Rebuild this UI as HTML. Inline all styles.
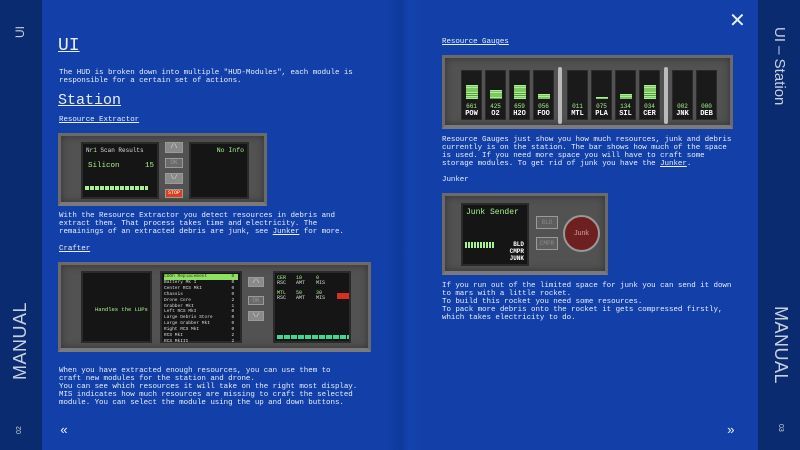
<!DOCTYPE html><html><head><style>
*{margin:0;padding:0;box-sizing:border-box}
body{width:800px;height:450px;overflow:hidden;background:#1240a8;font-family:"Liberation Mono",monospace;color:#e8eefc;position:relative}
.sb{position:absolute;top:0;width:42px;height:450px;background:#0b2b70}
.fold{position:absolute;left:385px;top:0;width:40px;height:450px;background:linear-gradient(90deg,#1240a8,#0f3a9c 40%,#1443ad 60%,#1240a8)}
.a{position:absolute}
.t{font-size:7.5px;line-height:7.9px;white-space:pre;letter-spacing:-.05px}
u{text-decoration:underline}
.panel{position:absolute;background:#525252;border:3px solid #6a6a6a;border-bottom:4px solid #7a7a7a;box-shadow:inset 0 0 8px #333}
.scr{position:absolute;background:#151515;border:2px solid #2a2a2a}
.g{color:#a8f090;font-size:7px;font-family:"Liberation Mono",monospace}
.btn{position:absolute;background:#8a8a8a;border:1px solid #9a9a9a;color:#ddd;font-size:6px;text-align:center}
.vt{position:absolute;color:#c8d0e0;font-family:"Liberation Sans",sans-serif;transform-origin:left top;white-space:nowrap}
.gauge{position:absolute;top:12px;width:21px;height:50px;background:#1a1a1a;border:1px solid #2b2b2b}
.gauge .bar{position:absolute;left:4px;width:12px;background:repeating-linear-gradient(#a8f090 0 1.3px,#5a9a40 1.3px 2.2px)}
.gauge .n{position:absolute;left:0;width:100%;top:32px;font-size:6px;color:#a8f090;text-align:center}
.gauge .l{position:absolute;left:0;width:100%;top:39px;font-size:7px;color:#fff;text-align:center;font-weight:bold}
</style></head><body>
<div class="sb" style="left:0"></div>
<div class="sb" style="left:758px"></div>
<div class="fold"></div>
<div class="vt" style="left:13px;top:38px;transform:rotate(-90deg);font-size:12px">UI</div>
<div class="vt" style="left:10px;top:380px;transform:rotate(-90deg);font-size:18px;letter-spacing:.5px">MANUAL</div>
<div class="vt" style="left:16px;top:434px;transform:rotate(-90deg);font-size:7px">02</div>
<div class="vt" style="left:788px;top:27px;transform:rotate(90deg);font-size:15px">UI – Station</div>
<div class="vt" style="left:791px;top:306px;transform:rotate(90deg);font-size:18px;letter-spacing:.5px">MANUAL</div>
<div class="vt" style="left:784px;top:424px;transform:rotate(90deg);font-size:7px">03</div>

<div class="a" style="left:58px;top:36px;font-size:18px;text-decoration:underline">UI</div>
<div class="a t" style="left:59px;top:70px">The HUD is broken down into multiple "HUD-Modules", each module is
responsible for a certain set of actions.</div>
<div class="a" style="left:58px;top:92px;font-size:15px;text-decoration:underline">Station</div>
<div class="a t" style="left:59px;top:117px"><u>Resource Extractor</u></div>

<div class="panel" style="left:58px;top:133px;width:209px;height:73px">
 <div class="scr" style="left:20px;top:6px;width:78px;height:57px">
  <div class="a" style="left:3px;top:3px;font-size:6px;color:#ddd">Nr<span style="color:#a8f090">1</span>  Scan Results</div>
  <div class="a g" style="left:5px;top:18px;font-size:7.5px">Silicon</div><div class="a g" style="left:62px;top:18px;font-size:7.5px">15</div>
  <div class="a" style="left:2px;top:42px;width:63px;height:4px;background:repeating-linear-gradient(90deg,#a8f090 0 4px,transparent 4px 5px)"></div>
 </div>
 <div class="btn" style="left:104px;top:6px;width:18px;height:11px">/\</div>
 <div class="btn" style="left:104px;top:22px;width:18px;height:10px;background:#6a6a6a;color:#999">OK</div>
 <div class="btn" style="left:104px;top:37px;width:18px;height:11px">\/</div>
 <div class="btn" style="left:104px;top:53px;width:18px;height:9px;background:#d84020;color:#fff;font-size:5px">STOP</div>
 <div class="scr" style="left:128px;top:6px;width:60px;height:57px"><div class="a g" style="right:3px;top:3px;font-size:6.5px">No Info</div></div>
</div>

<div class="a t" style="left:59px;top:213px">With the Resource Extractor you detect resources in debris and
extract them. That process takes time and electricity. The
remainings of an extracted debris are junk, see <u>Junker</u> for more.</div>
<div class="a t" style="left:59px;top:246px"><u>Crafter</u></div>

<div class="panel" style="left:58px;top:262px;width:313px;height:90px">
 <div class="scr" style="left:20px;top:6px;width:71px;height:72px"><div class="a g" style="left:12px;top:33px;font-size:5.5px">Handles the LUPs</div></div>
 <div class="scr" style="left:99px;top:6px;width:82px;height:72px;font-size:4.5px;line-height:5.9px;color:#ddd;padding:1px 2px;white-space:pre"><div style="background:#90e060;color:#333">COOh Replacement         0</div>Battery Mk I             0
Center RCS MkI           0
Chassis                  0
Drone Core               2
Grabber MkI              1
Left RCS MkI             0
Large Debris Store       0
Large Grabber MkI        0
Right RCS MkI            0
RCS MkI                  2
RCS MkIII                2</div>
 <div class="btn" style="left:187px;top:12px;width:16px;height:10px">/\</div>
 <div class="btn" style="left:187px;top:31px;width:16px;height:9px;background:#6a6a6a;color:#999">OK</div>
 <div class="btn" style="left:187px;top:46px;width:16px;height:10px">\/</div>
 <div class="scr" style="left:212px;top:6px;width:78px;height:72px;font-size:5px;line-height:5px;color:#ddd">
  <div class="a" style="left:2px;top:3px"><span style="color:#a8f090">CER</span><br>RSC</div><div class="a" style="left:21px;top:3px"><span style="color:#a8f090">10</span><br>AMT</div><div class="a" style="left:41px;top:3px"><span style="color:#a8f090">0</span><br>MIS</div>
  <div class="a" style="left:2px;top:18px"><span style="color:#a8f090">MTL</span><br>RSC</div><div class="a" style="left:21px;top:18px"><span style="color:#a8f090">50</span><br>AMT</div><div class="a" style="left:41px;top:18px"><span style="color:#a8f090">30</span><br>MIS</div>
  <div class="a" style="left:62px;top:20px;width:12px;height:6px;background:#d83020"></div>
  <div class="a" style="left:2px;top:62px;width:72px;height:4px;background:repeating-linear-gradient(90deg,#40d890 0 6px,transparent 6px 7px)"></div>
 </div>
</div>

<div class="a t" style="left:59px;top:368px">When you have extracted enough resources, you can use them to
craft new modules for the station and drone.
You can see which resources it will take on the right most display.
MIS indicates how much resources are missing to craft the selected
module. You can select the module using the up and down buttons.</div>
<div class="a" style="left:60px;top:423px;font-size:13px">«</div>

<div class="a" style="left:729px;top:8px;font-size:20px;font-family:'Liberation Sans',sans-serif">✕</div>
<div class="a" style="left:727px;top:423px;font-size:13px">»</div>

<div class="a t" style="left:442px;top:39px"><u>Resource Gauges</u></div>
<div class="panel" style="left:442px;top:55px;width:291px;height:74px">
 <div class="gauge" style="left:16px"><div class="bar" style="top:14px;height:14px"></div><div class="n">661</div><div class="l">POW</div></div>
 <div class="gauge" style="left:40px"><div class="bar" style="top:19px;height:9px"></div><div class="n">425</div><div class="l">O2</div></div>
 <div class="gauge" style="left:64px"><div class="bar" style="top:14px;height:14px"></div><div class="n">659</div><div class="l">H2O</div></div>
 <div class="gauge" style="left:88px"><div class="bar" style="top:23px;height:5px"></div><div class="n">056</div><div class="l">FOO</div></div>
 <div class="a" style="left:113px;top:9px;width:4px;height:57px;background:#bbb;border-radius:2px"></div>
 <div class="gauge" style="left:122px"><div class="n">011</div><div class="l">MTL</div></div>
 <div class="gauge" style="left:146px"><div class="bar" style="top:26px;height:2px"></div><div class="n">075</div><div class="l">PLA</div></div>
 <div class="gauge" style="left:170px"><div class="bar" style="top:23px;height:5px"></div><div class="n">134</div><div class="l">SIL</div></div>
 <div class="gauge" style="left:194px"><div class="bar" style="top:14px;height:14px"></div><div class="n">034</div><div class="l">CER</div></div>
 <div class="a" style="left:219px;top:9px;width:4px;height:57px;background:#bbb;border-radius:2px"></div>
 <div class="gauge" style="left:227px"><div class="n">002</div><div class="l">JNK</div></div>
 <div class="gauge" style="left:251px"><div class="n">000</div><div class="l">DEB</div></div>
</div>
<div class="a t" style="left:442px;top:137px">Resource Gauges just show you how much resources, junk and debris
currently is on the station. The bar shows how much of the space
is used. If you need more space you will have to craft some
storage modules. To get rid of junk you have the <u>Junker</u>.</div>
<div class="a t" style="left:442px;top:177px">Junker</div>
<div class="panel" style="left:442px;top:193px;width:166px;height:82px">
 <div class="scr" style="left:16px;top:7px;width:68px;height:63px">
  <div class="a g" style="left:3px;top:3px;font-size:8px">Junk Sender</div>
  <div class="a" style="left:2px;top:37px;width:30px;height:6px;background:repeating-linear-gradient(90deg,#a8f090 0 2px,transparent 2px 3px)"></div>
  <div class="a" style="right:3px;top:36px;font-size:6px;line-height:7px;color:#fff;text-align:right;font-weight:bold">BLD<br>CMPR<br>JUNK</div>
 </div>
 <div class="btn" style="left:91px;top:20px;width:22px;height:13px;background:#5e5e5e;color:#888;font-size:6px;line-height:12px">BLD</div>
 <div class="btn" style="left:91px;top:41px;width:22px;height:13px;background:#5e5e5e;color:#888;font-size:6px;line-height:12px">CMPR</div>
 <div class="a" style="left:118px;top:19px;width:37px;height:37px;border-radius:50%;background:#6e2020;border:2px solid #999;color:#d0a0a0;font-size:7px;text-align:center;line-height:33px;font-family:'Liberation Sans',sans-serif">Junk</div>
</div>
<div class="a t" style="left:442px;top:283px">If you run out of the limited space for junk you can send it down
to mars with a little rocket.
To build this rocket you need some resources.
To pack more debris onto the rocket it gets compressed firstly,
which takes electricity to do.</div>
</body></html>
